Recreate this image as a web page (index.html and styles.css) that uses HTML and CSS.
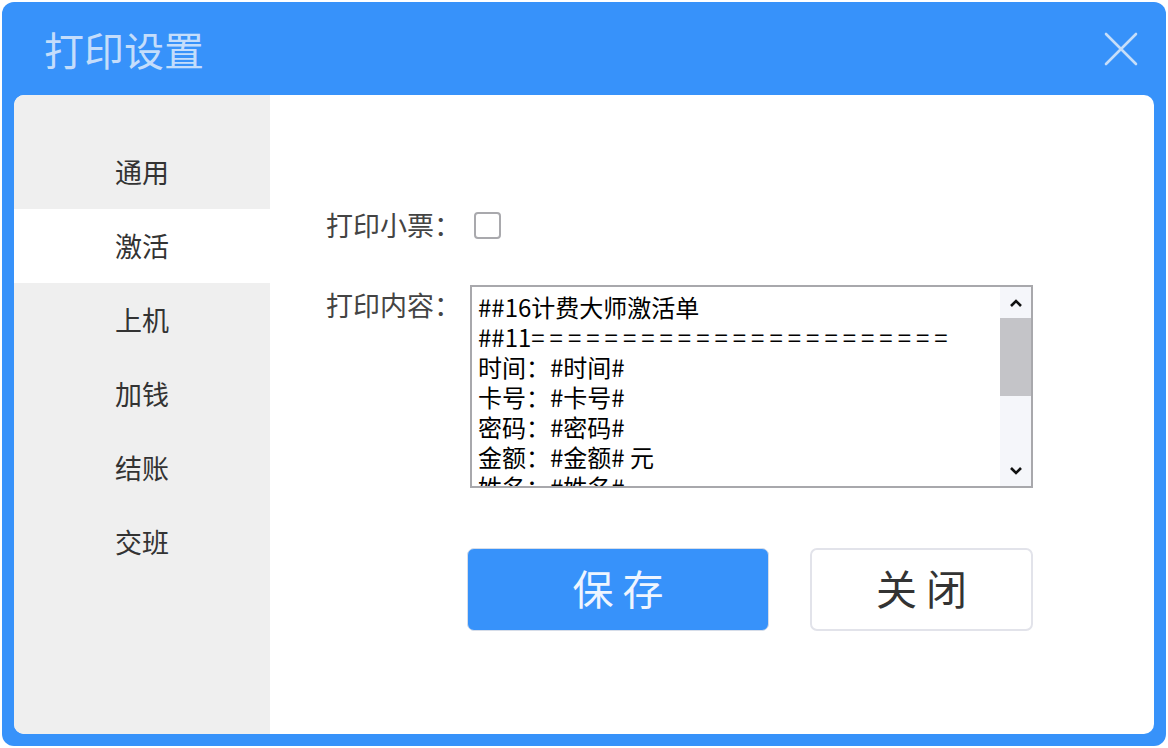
FILE: index.html
```html
<!DOCTYPE html>
<html lang="zh-CN">
<head>
  <meta charset="UTF-8" />
  <title>打印设置</title>
  <link rel="stylesheet" href="styles.css">
</head>
<body>
<div class="window">
  <div class="titlebar">
    <h1>打印设置</h1>
    <button class="close" aria-label="关闭">
      <svg width="34" height="34" viewBox="0 0 34 34"><path d="M2 2 L32 32 M32 2 L2 32" stroke="#c6def9" stroke-width="2.6" stroke-linecap="round" fill="none"/></svg>
    </button>
  </div>
  <div class="panel">
    <div class="sidebar">
      <div class="nav-item">通用</div>
      <div class="nav-item active">激活</div>
      <div class="nav-item">上机</div>
      <div class="nav-item">加钱</div>
      <div class="nav-item">结账</div>
      <div class="nav-item">交班</div>
    </div>
    <div class="content">
      <div class="row">
        <label>打印小票：</label>
        <span class="checkbox"></span>
      </div>
      <div class="row row-top">
        <label>打印内容：</label>
        <div class="textbox">
          <div class="text">
            <div>##16计费大师激活单</div>
            <div>##11<span class="eq">=======================</span></div>
            <div>时间：#时间#</div>
            <div>卡号：#卡号#</div>
            <div>密码：#密码#</div>
            <div>金额：#金额# 元</div>
            <div>姓名：#姓名#</div>
          </div>
          <div class="scrollbar">
            <div class="sb-btn">
              <svg width="14" height="10" viewBox="0 0 14 10"><path d="M2 8 L7 3 L12 8" stroke="#111" stroke-width="2.6" fill="none"/></svg>
            </div>
            <div class="sb-thumb"></div>
            <div class="sb-track"></div>
            <div class="sb-btn">
              <svg width="14" height="10" viewBox="0 0 14 10"><path d="M2 2 L7 7 L12 2" stroke="#111" stroke-width="2.6" fill="none"/></svg>
            </div>
          </div>
        </div>
      </div>
      <div class="actions">
        <button class="btn primary">保 存</button>
        <button class="btn">关 闭</button>
      </div>
    </div>
  </div>
</div>
</body>
</html>
```

FILE: styles.css
```css
* { box-sizing: border-box; }
body {
  margin: 0;
  padding: 2px;
  background: #fff;
  font-family: "Noto Sans CJK SC", "Noto Sans", sans-serif;
}
.window {
  width: 1164px;
  height: 744px;
  background: #3792fa;
  border-radius: 12px;
  padding: 0 12px 12px;
  display: flex;
  flex-direction: column;
}
.titlebar {
  height: 93px;
  display: flex;
  align-items: center;
  justify-content: space-between;
  padding: 0 16px 0 30px;
}
.titlebar h1 {
  margin: 0;
  font-size: 40px;
  font-weight: normal;
  color: #c4ddfb;
  line-height: 1;
}
.close {
  background: none;
  border: none;
  padding: 0;
  width: 34px;
  height: 34px;
  cursor: pointer;
}
.panel {
  flex: 1;
  background: #fff;
  border-radius: 10px;
  display: flex;
  overflow: hidden;
}
.sidebar {
  width: 256px;
  background: #efefef;
  padding-top: 40px;
}
.nav-item {
  height: 74px;
  display: flex;
  align-items: center;
  justify-content: center;
  font-size: 27px;
  color: #333;
  padding-bottom: 2px;
  cursor: pointer;
}
.nav-item.active {
  background: #fff;
}
.content {
  flex: 1;
  padding: 110px 0 0 56px;
}
.row {
  display: flex;
  align-items: center;
}
.row-top {
  align-items: flex-start;
  margin-top: 40px;
}
.row label {
  width: 144px;
  font-size: 27px;
  line-height: 40px;
  color: #444;
}
.checkbox {
  width: 27px;
  height: 27px;
  margin-left: 4px;
  border: 2px solid #a9a9ad;
  border-radius: 4px;
  background: #fff;
}
.textbox {
  width: 563px;
  height: 203px;
  border: 2px solid #a8a8ac;
  display: flex;
  overflow: hidden;
}
.text {
  flex: 1;
  padding: 5px 0 0 6px;
  font-size: 24px;
  line-height: 30px;
  color: #000;
  overflow: hidden;
  white-space: nowrap;
}
.eq {
  letter-spacing: 5px;
}
.scrollbar {
  width: 31px;
  background: #f5f6fa;
  display: flex;
  flex-direction: column;
}
.sb-btn {
  height: 31px;
  display: flex;
  align-items: center;
  justify-content: center;
}
.sb-thumb {
  height: 78px;
  background: #c4c4c8;
}
.sb-track {
  flex: 1;
}
.actions {
  display: flex;
  gap: 41px;
  margin: 60px 0 0 141px;
}
.btn {
  width: 223px;
  height: 83px;
  border: 2px solid #e2e3ea;
  border-radius: 7px;
  background: #fff;
  font-family: inherit;
  font-size: 41px;
  line-height: 1;
  padding: 0 0 4px;
  color: #333;
  cursor: pointer;
}
.btn.primary {
  width: 302px;
  background: #3792fa;
  border: 1px solid #d6dde9;
  color: #eef5ff;
}
```
